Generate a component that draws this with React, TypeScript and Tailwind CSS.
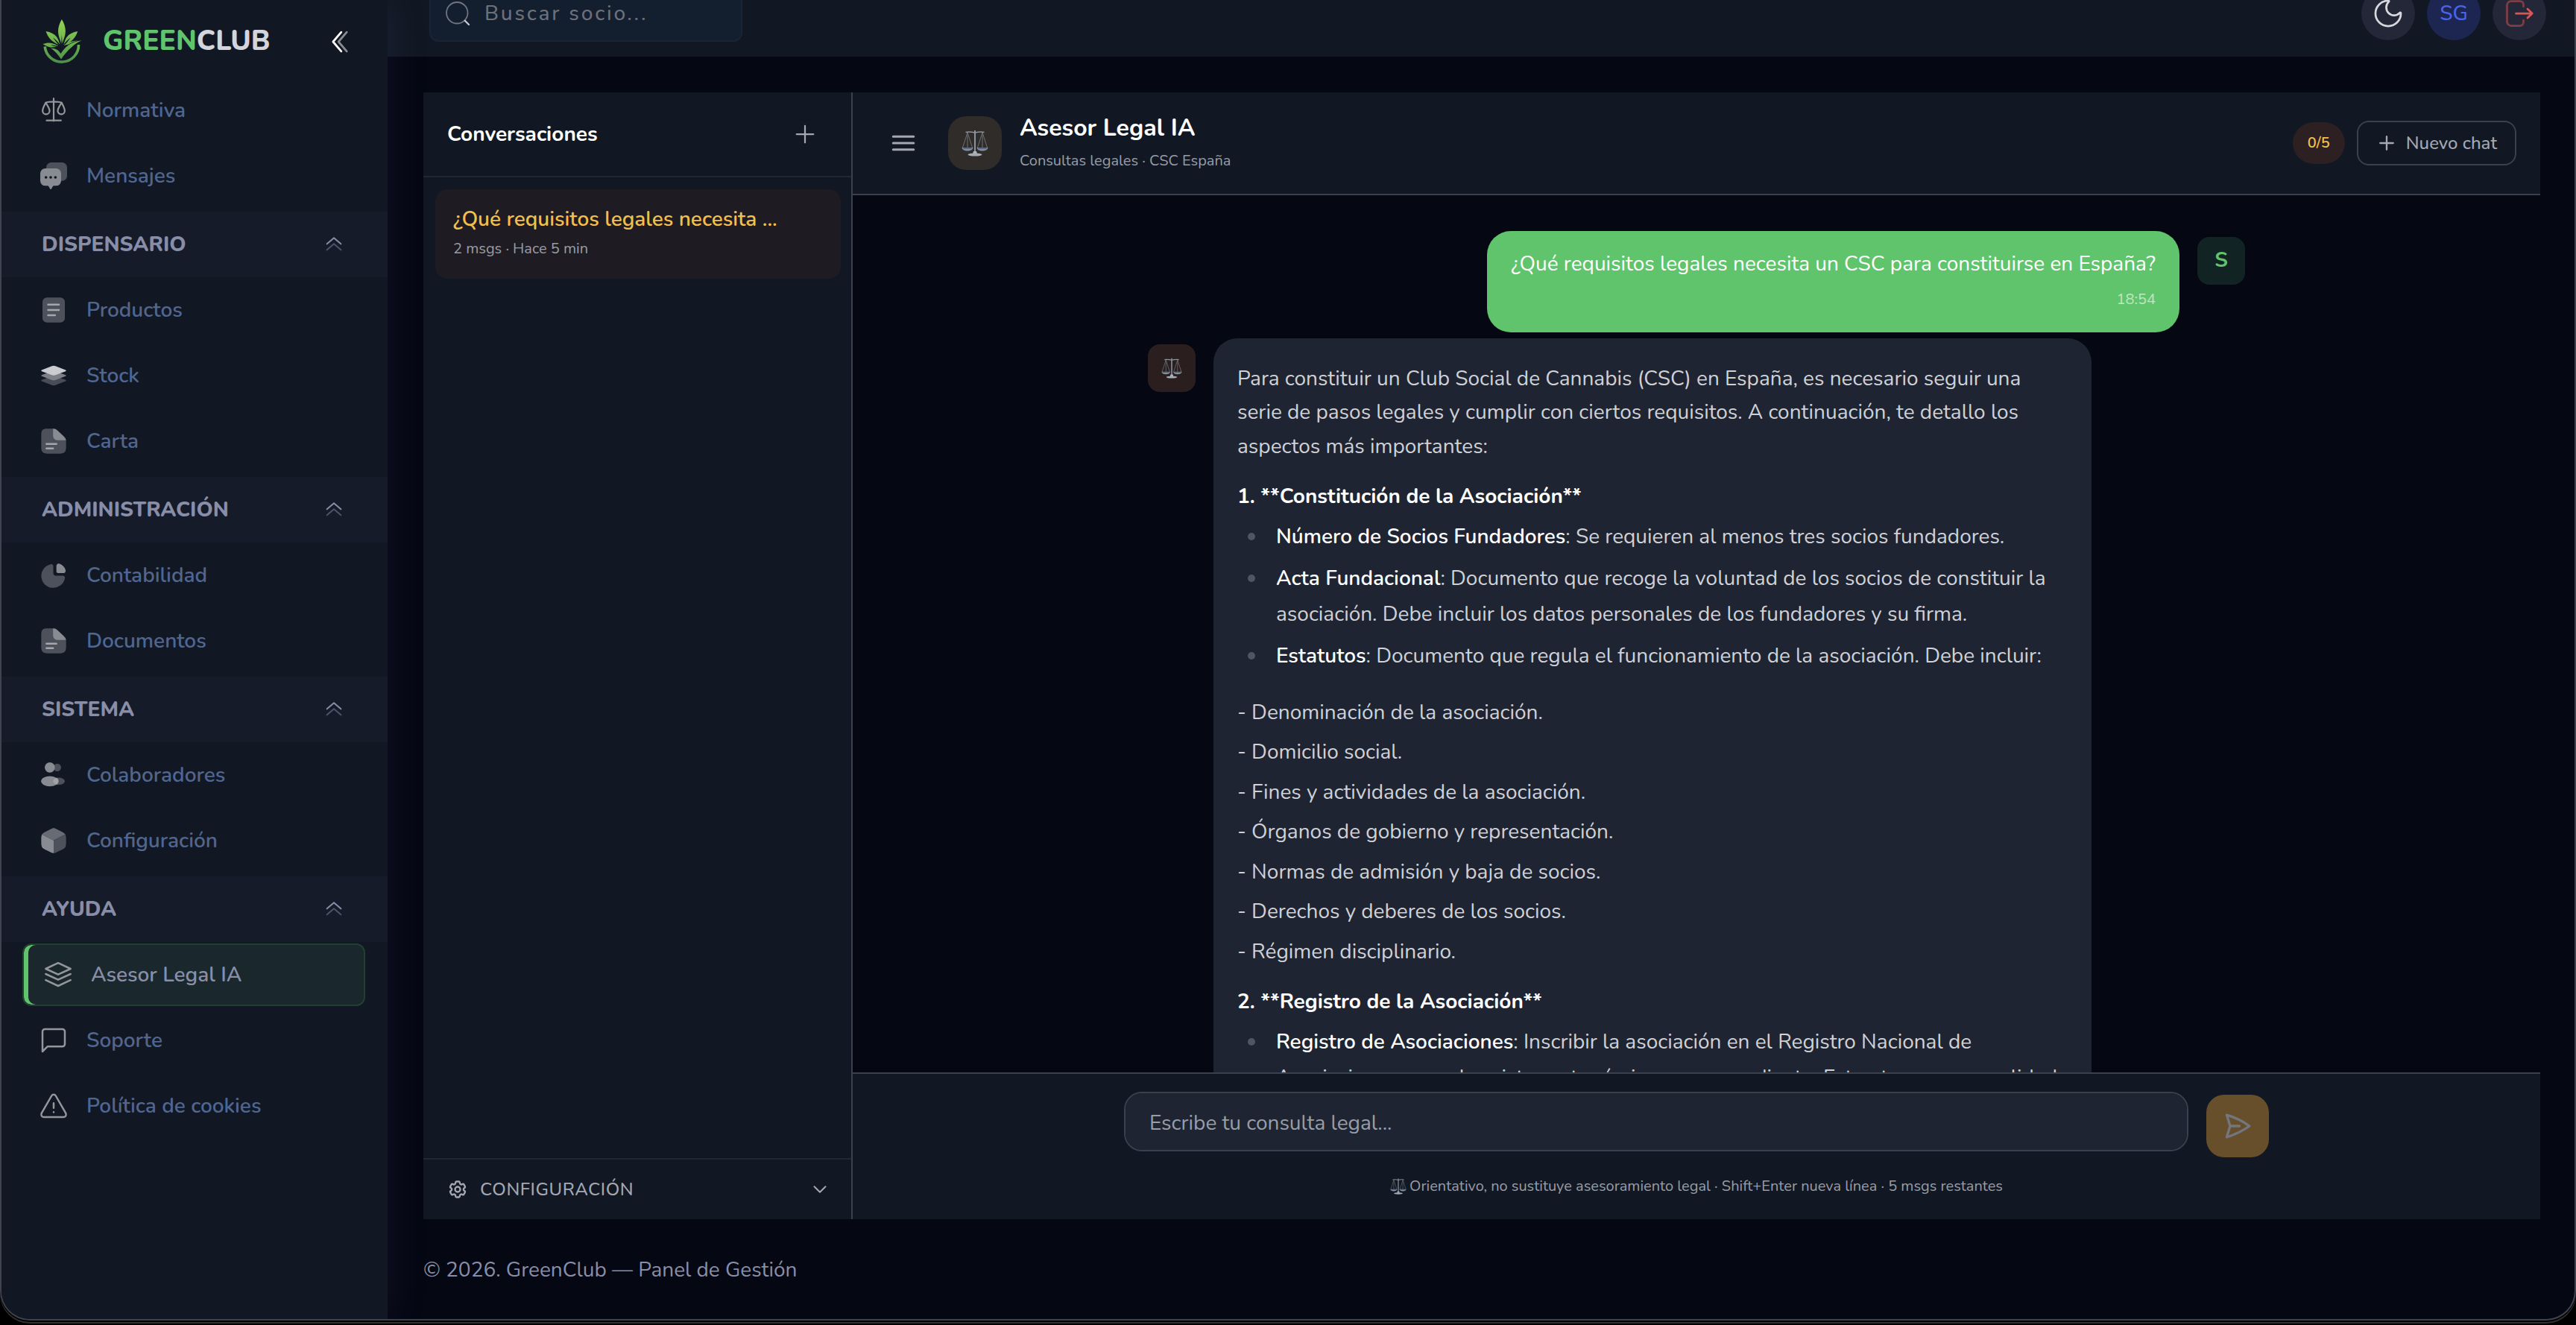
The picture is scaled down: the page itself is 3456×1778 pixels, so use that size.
import { useState } from "react";
import type { ReactNode } from "react";
import {
    HiOutlineBars3,
    HiOutlineChevronDown,
    HiOutlineCog6Tooth,
    HiOutlinePaperAirplane,
    HiOutlinePlus,
} from "react-icons/hi2";

const Icon = ({ className = "h-10 w-10", children }: { className?: string; children: ReactNode }) => (
    <svg
        className={`shrink-0 ${className}`}
        viewBox="0 0 24 24"
        fill="none"
        stroke="currentColor"
        strokeWidth="1.5"
        strokeLinecap="round"
        strokeLinejoin="round"
        aria-hidden="true"
    >
        {children}
    </svg>
);

const BalanceIcon = () => (
    <Icon>
        <path strokeWidth="1.3" d="M12 2.4V20.6M6.3 20.2h11.6M5.6 5.9C8 4.7 16 4.7 18.4 5.9" />
        <path strokeWidth="1.3" d="M5.6 5.9C4.6 8 3.1 10.4 3.1 12.4a2.8 2.8 0 0 0 5.6 0C8.7 10.4 6.9 8 5.6 5.9zM18.4 5.9c-1.3 2.1-3.1 4.5-3.1 6.5a2.8 2.8 0 0 0 5.6 0c0-2-1.5-4.4-2.5-6.5z" />
    </Icon>
);

const MessagesIcon = () => (
    <Icon>
        <rect x="6" y="1.2" width="16.8" height="14.8" rx="4" fill="#4d515c" stroke="none" />
        <path d="M5.2 6h8.8a4 4 0 0 1 4 4v6a4 4 0 0 1-4 4h-1.7c-.9 0-1.4 1.1-2 2.3-.3.6-1 .6-1.3 0-.6-1.2-1.1-2.3-2-2.3H5.2a4 4 0 0 1-4-4v-6a4 4 0 0 1 4-4z" fill="#888b91" stroke="none" />
        <g fill="#111823" stroke="none">
            <circle cx="5.8" cy="13.2" r="1.1" />
            <circle cx="9.6" cy="13.2" r="1.1" />
            <circle cx="13.4" cy="13.2" r="1.1" />
        </g>
    </Icon>
);

const ListIcon = () => (
    <Icon>
        <rect x="3" y="1.9" width="18" height="20.2" rx="3.5" fill="#4d515c" stroke="none" />
        <path stroke="#a5a7ad" d="M7.5 7.7h8.7M7.5 12h8.7M7.5 16.2h5.6" />
    </Icon>
);

const StockIcon = () => (
    <Icon>
        <path d="M2.4 15.5 12 12l9.6 3.5c.6.3.6.7 0 1l-8.1 3.1c-1 .4-2 .4-3 0l-8.1-3.1c-.6-.3-.6-.7 0-1z" fill="#474c57" stroke="none" />
        <path d="M2.4 11.5 12 8l9.6 3.5c.6.3.6.7 0 1l-8.1 3.1c-1 .4-2 .4-3 0l-8.1-3.1c-.6-.3-.6-.7 0-1z" fill="#7b7f86" stroke="none" />
        <path d="m2.4 7.5 8.1-3.1c1-.4 2-.4 3 0l8.1 3.1c.6.3.6.7 0 1l-8.1 3.1c-1 .4-2 .4-3 0L2.4 8.5c-.6-.3-.6-.7 0-1z" fill="#c9cbd0" stroke="none" />
    </Icon>
);

const NoteIcon = () => (
    <Icon>
        <path d="M6.5 2h5c1.6 0 2.5.5 3.6 1.5l5.1 4.8c1.2 1.1 1.8 2.2 1.8 3.8V17c0 3.5-1.3 5-4.8 5H6.8C3.3 22 2 20.5 2 17V7c0-3.5 1-5 4.5-5z" fill="#4d515c" stroke="none" />
        <path d="M11.5 2c1.6 0 2.5.5 3.6 1.5l5.1 4.8c.9.9 1.5 1.8 1.7 3H16c-3 0-4.5-1.4-4.5-4.3z" fill="#888b91" stroke="none" />
        <path stroke="#a5a7ad" d="M6.2 14.2h8M6.2 17.8h5.3" />
    </Icon>
);

const PieIcon = () => (
    <Icon>
        <path d="M9.5 3.1c1.3-.3 2.2.5 2.2 1.7v5.4c0 1.3.8 2.1 2.1 2.1h5.5c1.2 0 2 .9 1.7 2.2A9.6 9.6 0 1 1 9.5 3.1z" fill="#4d515c" stroke="none" />
        <path d="M14.2 4.5c0-1.5 1.2-2.3 2.6-1.8a8.3 8.3 0 0 1 4.7 4.8c.5 1.4-.3 2.7-1.8 2.7h-4.2c-.8 0-1.3-.5-1.3-1.3z" fill="#888b91" stroke="none" />
    </Icon>
);

const UsersIcon = () => (
    <Icon>
        <g fill="#4d515c" stroke="none">
            <circle cx="14.9" cy="5.9" r="3.1" />
            <ellipse cx="16" cy="17" rx="5" ry="2.9" />
        </g>
        <g fill="#888b91" stroke="none">
            <circle cx="8.9" cy="5.9" r="4.1" />
            <ellipse cx="8.9" cy="17" rx="7" ry="4.1" />
        </g>
        <path d="M14.6 14.3a5 2.9 0 0 0 0 5.3c1.7-1.3 1.7-4 0-5.3z" fill="#a0a2a8" stroke="none" />
    </Icon>
);

const CubeIcon = () => (
    <Icon>
        <path d="M12 2c.8 0 1.5.3 2.9 1l3.8 1.9c1.3.7 2.2 1.3 2.7 2.1L12 11.8 2.6 7c.5-.8 1.4-1.4 2.7-2.1L9.1 3c1.4-.7 2.1-1 2.9-1z" fill="#676b74" stroke="none" />
        <path d="M2.6 7C2.1 8 2 9.2 2 11v2c0 2.5.2 4 1.2 5 .8.8 3 1.7 5.9 3.1 1.4.7 2.1.9 2.9.9V11.8z" fill="#888b91" stroke="none" />
        <path d="M21.4 7c.5 1 .6 2.2.6 4v2c0 2.5-.2 4-1.2 5-.8.8-3 1.7-5.9 3.1-1.4.7-2.1.9-2.9.9V11.8z" fill="#4d515c" stroke="none" />
    </Icon>
);

const LayersIcon = () => (
    <Icon>
        <path d="m12 2.5-10 4.7 10 4.6 10-4.6zM2 11.4l10 4.6 10-4.6M2 16.3l10 4.7 10-4.7" />
    </Icon>
);

const ChatIcon = () => (
    <Icon>
        <path d="M21 15a2 2 0 0 1-2 2H7l-4 4V5a2 2 0 0 1 2-2h14a2 2 0 0 1 2 2z" />
    </Icon>
);

const WarningIcon = () => (
    <Icon>
        <path d="M10.3 3.9 2.3 17.8c-.8 1.5 0 3.2 1.7 3.2h16c1.7 0 2.5-1.7 1.7-3.2l-8-13.9c-.8-1.4-2.6-1.4-3.4 0zM12 9.8v3.9M12 17v.1" />
    </Icon>
);

const ScalesEmblem = ({ className }: { className: string }) => (
    <svg className={`shrink-0 ${className}`} viewBox="0 0 36 36" fill="none" aria-hidden="true">
        <path d="M5.5 3.5c4-1 8-.5 12.5.5 4.5-1 8.5-1.5 12.5-.5" stroke="#8d939b" strokeWidth="1.6" />
        <path d="M18 1v29" stroke="#8794a4" strokeWidth="2" />
        <path d="M8 4 1.5 24M8 4v20M8 4l6.5 20M28 4l-6.5 20M28 4v20M28 4l6.5 20" stroke="#6d7074" strokeWidth="1" />
        <path d="M.5 24h15c-.5 3-3.5 4.5-7.5 4.5S1 27 .5 24zM20.5 24h15c-.5 3-3.5 4.5-7.5 4.5s-7-1.5-7.5-4.5z" fill="#7e8ea3" />
        <path d="M2.5 25h11M22.5 25h11" stroke="#3c4654" strokeWidth="1" />
        <path d="M16 29h4l1 3h-6z" fill="#a9b6c4" />
        <ellipse cx="18" cy="33.5" rx="9.5" ry="2" fill="#a3abb4" />
    </svg>
);

const Logo = () => (
    <svg className="h-[60px] w-[58px] shrink-0" viewBox="0 0 58 60" aria-hidden="true">
        <defs>
            <linearGradient id="leaf" x1="0" y1="0" x2="0" y2="60" gradientUnits="userSpaceOnUse">
                <stop stopColor="#93d552" />
                <stop offset="1" stopColor="#4b8f4a" />
            </linearGradient>
        </defs>
        <g fill="url(#leaf)">
            <path d="M28.9 0c3 5 5 10.5 5 16 0 6-2.5 10.5-4.3 16.5l-.7-12-.7 12C26.4 26.5 24 22 24 16c0-5.500 2-11 4.900-16z" />
            <path d="M7.5 16c6.5 1 11.5 3.5 14.5 7.5 2.2 3 3.2 6 4.5 10.5-2-3-6-7-9.5-9.5 2.5 3.5 5 6.5 7.5 9.5-4-2-8.5-4.5-11.5-8-2.5-3-4-6-5.5-10z" />
            <path d="M50.3 16c-6.5 1-11.5 3.5-14.5 7.5-2.2 3-3.2 6-4.5 10.5 2-3 6-7 9.5-9.5-2.5 3.5-5 6.5-7.5 9.5 4-2 8.5-4.5 11.5-8 2.5-3 4-6 5.5-10z" />
            <path d="M3.5 33c5-2 9.5-2 13-.8 3 1 5 2 8 3.8-3-.8-7-1.5-10.5-1.5 2.5 1 5 1.7 8 2.3-3.5.8-7.5 1-10.5.2-3-.8-5.5-2.5-8-4z" />
            <path d="M14 38.5c3.5.5 6.5 1 8.5 2.3 2 1.4 3.5 3 5 5.2 5-8 10.5-12.5 17-15 4-1.5 7-2.2 11-2.4-5 1.8-9 4.5-13 8.4C36.5 42 32 47.5 28 53.5c-3.5-5.5-8-11-14-15z" />
            <path d="M38 33.5c4-2.5 8-4.5 13-5-5 .2-9.5 1-13 2.5-2.5 1-4.5 2-6.5 4z" />
        </g>
        <path d="M6.2 36.5a22.7 22.7 0 0 0 45.3-2.5" fill="none" stroke="url(#leaf)" strokeWidth="3.6" />
    </svg>
);

type NavItem = { label: string; icon: ReactNode; active?: boolean };

const topItems: NavItem[] = [
    { label: "Normativa", icon: <BalanceIcon /> },
    { label: "Mensajes", icon: <MessagesIcon /> },
];

const sections: { title: string; items: NavItem[] }[] = [
    {
        title: "DISPENSARIO",
        items: [
            { label: "Productos", icon: <ListIcon /> },
            { label: "Stock", icon: <StockIcon /> },
            { label: "Carta", icon: <NoteIcon /> },
        ],
    },
    {
        title: "ADMINISTRACIÓN",
        items: [
            { label: "Contabilidad", icon: <PieIcon /> },
            { label: "Documentos", icon: <NoteIcon /> },
        ],
    },
    {
        title: "SISTEMA",
        items: [
            { label: "Colaboradores", icon: <UsersIcon /> },
            { label: "Configuración", icon: <CubeIcon /> },
        ],
    },
    {
        title: "AYUDA",
        items: [
            { label: "Asesor Legal IA", icon: <LayersIcon />, active: true },
            { label: "Soporte", icon: <ChatIcon /> },
            { label: "Política de cookies", icon: <WarningIcon /> },
        ],
    },
];

const NavList = ({ items }: { items: NavItem[] }) => (
    <ul className="pb-1 pl-7 pr-[30px]">
        {items.map((item) => (
            <li key={item.label} className="py-0.5">
                <a
                    href="#"
                    aria-current={item.active ? "page" : undefined}
                    className={`flex h-[84px] items-center gap-6 rounded-xl border-2 text-[28px] font-semibold ${item.active
                        ? "border-[#22402f] bg-[#1a272c] pl-[26px] text-[#888ea8] shadow-[inset_6px_0_0_#60c46c]"
                        : "border-transparent pl-5 text-[#506690]"
                        }`}
                >
                    <span className="text-[#93969b]">{item.icon}</span>
                    {item.label}
                </a>
            </li>
        ))}
    </ul>
);

const Sidebar = () => (
    <aside className="relative z-10 w-[518px] shrink-0 bg-[#111823] shadow-[0_0_50px_rgba(94,92,154,0.15)]">
        <div className="flex h-[104px] items-center pb-1 pl-[52px] pr-[42px] pt-3">
            <a href="#" className="flex items-center gap-[26px] text-[37px] font-extrabold text-[#d3d4dc]">
                <Logo />
                <span>
                    <span className="text-[#60c46c]">GREEN</span>CLUB
                </span>
            </a>
            <button type="button" aria-label="Contraer menú" className="ml-auto text-white">
                <Icon className="h-11 w-11">
                    <path d="m13 19-6-7 6-7" />
                    <path opacity="0.5" d="m17 19-6-7 6-7" />
                </Icon>
            </button>
        </div>
        <nav>
            <NavList items={topItems} />
            {sections.map((section) => (
                <div key={section.title}>
                    <h2>
                        <button
                            type="button"
                            aria-expanded="true"
                            className="flex h-[88px] w-full items-center justify-between bg-[#151b29] pl-[54px] pr-14 text-[28px] font-extrabold text-[#888ea8]"
                        >
                            {section.title}
                            <Icon className="h-8 w-8">
                                <path d="m19 11.5-7-6-7 6" />
                                <path opacity="0.5" d="m19 17.5-7-6-7 6" />
                            </Icon>
                        </button>
                    </h2>
                    <NavList items={section.items} />
                </div>
            ))}
        </nav>
    </aside>
);

// The bar is scrolled partly out of view, so its content hangs from the bottom edge
const Topbar = () => (
    <header className="flex h-[76px] shrink-0 items-end overflow-hidden bg-[#111823]">
        <div className="flex h-[116px] w-full shrink-0 items-center justify-between pl-14 pr-[38px]">
            <label className="flex h-[76px] w-[420px] items-center gap-[18px] rounded-xl border-2 border-[#182537] bg-[#131e2f] pl-[18px] text-[#71757f]">
                <Icon className="h-9 w-9">
                    <circle cx="11.5" cy="11.5" r="9.5" strokeWidth="1.2" />
                    <path d="m18.5 18.5 3.5 3.5" className="text-[#c9cbd0]" />
                </Icon>
                <input
                    type="text"
                    aria-label="Buscar socio"
                    placeholder="Buscar socio..."
                    className="w-full bg-transparent text-[28px] font-medium tracking-widest outline-none placeholder:text-[#6b707b]"
                />
            </label>
            <div className="flex gap-4">
                <button type="button" aria-label="Modo oscuro" className="flex size-[72px] items-center justify-center rounded-full bg-[#232738] text-[#d7d8dc]">
                    <Icon className="h-11 w-11">
                        <path d="M12 2.7a9.3 9.3 0 1 0 9.3 9.3c0-.7-.6-.8-.9-.3A5.3 5.3 0 1 1 12.3 3.6c.5-.3.4-.9-.3-.9z" />
                    </Icon>
                </button>
                <button type="button" className="size-[72px] rounded-full bg-[#1c2650] text-[28px] font-medium text-[#4a63e7]">
                    SG
                </button>
                <button type="button" aria-label="Cerrar sesión" className="flex size-[72px] items-center justify-center rounded-full bg-[#232738] text-[#da5655]">
                    <Icon className="h-11 w-11">
                        <path opacity="0.5" d="M15 7V5.5A2.5 2.5 0 0 0 12.5 3H6a3 3 0 0 0-3 3v12a3 3 0 0 0 3 3h6.5a2.5 2.5 0 0 0 2.5-2.5V17" />
                        <path d="M9.5 12h11.8M18 8.7l3.4 3.3-3.4 3.3" />
                    </Icon>
                </button>
            </div>
        </div>
    </header>
);

const Conversations = () => (
    <section className="flex w-[576px] shrink-0 flex-col border-r-2 border-[#3a404d] bg-[#111823]">
        <div className="flex h-[114px] items-center justify-between border-b-2 border-[#212734] px-8">
            <h2 className="text-[28px] font-bold text-white">Conversaciones</h2>
            <button type="button" aria-label="Nueva conversación" className="p-3 text-[#a3a8b2]">
                <HiOutlinePlus className="size-9" />
            </button>
        </div>
        <div className="flex-1 pl-4 pr-3.5 pt-4">
            <button type="button" className="block h-[120px] w-full rounded-2xl bg-[#1e1c22] px-6 text-left">
                <span className="block text-[28px] font-semibold leading-10 text-[#f2bf4b]">¿Qué requisitos legales necesita ...</span>
                <span className="block text-xl leading-10 text-[#989ca6]">2 msgs · Hace 5 min</span>
            </button>
        </div>
        <button
            type="button"
            className="flex h-[82px] items-center gap-4 border-t-2 border-[#212734] pl-8 pr-[30px] text-2xl font-medium tracking-wide text-[#a3a8b2]"
        >
            <HiOutlineCog6Tooth className="size-7 stroke-2" />
            CONFIGURACIÓN
            <HiOutlineChevronDown className="ml-auto size-6 stroke-2" />
        </button>
    </section>
);

const Bullet = ({ title, children }: { title: string; children: ReactNode }) => (
    <li className="flex">
        <span className="ml-3.5 mr-7 mt-[19px] size-2.5 shrink-0 rounded-full bg-[#4f5561]" />
        <span>
            <strong className="font-semibold text-white">{title}</strong>: {children}
        </span>
    </li>
);

const statutes = [
    "Denominación de la asociación.",
    "Domicilio social.",
    "Fines y actividades de la asociación.",
    "Órganos de gobierno y representación.",
    "Normas de admisión y baja de socios.",
    "Derechos y deberes de los socios.",
    "Régimen disciplinario.",
];

const Messages = () => (
    <div className="min-h-0 flex-1 overflow-hidden pt-12">
        <div className="mx-auto flex w-full max-w-[1536px] flex-col gap-2 px-8 text-[28px] leading-relaxed">
            <div className="flex justify-end gap-6">
                <div className="max-w-4/5 rounded-[32px] bg-[#60c46c] px-8 pb-7 pt-[22px] text-white">
                    <p>¿Qué requisitos legales necesita un CSC para constituirse en España?</p>
                    <time className="mt-2 block text-right text-xl leading-8 text-white/60">18:54</time>
                </div>
                <div className="mt-2 flex size-16 shrink-0 items-center justify-center rounded-2xl bg-[#122324] font-bold text-[#60c46c]">
                    S
                </div>
            </div>
            <div className="flex gap-6">
                <div className="mt-2 flex size-16 shrink-0 items-center justify-center rounded-2xl bg-[#2a1f1e]">
                    <ScalesEmblem className="size-7" />
                </div>
                <div className="w-4/5 rounded-[32px] bg-[#1e2431] p-8 text-[#cfd1d6]">
                    <p>
                        Para constituir un Club Social de Cannabis (CSC) en España, es necesario seguir una serie de pasos
                        legales y cumplir con ciertos requisitos. A continuación, te detallo los aspectos más importantes:
                    </p>
                    <h3 className="mb-1.5 mt-[22px] font-bold text-white">1. **Constitución de la Asociación**</h3>
                    <ul className="flex flex-col gap-2 leading-[48px]">
                        <Bullet title="Número de Socios Fundadores">Se requieren al menos tres socios fundadores.</Bullet>
                        <Bullet title="Acta Fundacional">
                            Documento que recoge la voluntad de los socios de constituir la asociación. Debe incluir los
                            datos personales de los fundadores y su firma.
                        </Bullet>
                        <Bullet title="Estatutos">
                            Documento que regula el funcionamiento de la asociación. Debe incluir:
                        </Bullet>
                    </ul>
                    <div className="mt-[30px] flex flex-col gap-2">
                        {statutes.map((line) => (
                            <p key={line}>- {line}</p>
                        ))}
                    </div>
                    <h3 className="mb-1.5 mt-[22px] font-bold text-white">2. **Registro de la Asociación**</h3>
                    <ul className="flex flex-col gap-2 leading-[48px]">
                        <Bullet title="Registro de Asociaciones">
                            Inscribir la asociación en el Registro Nacional de Asociaciones o en el registro autonómico
                            correspondiente. Esto otorga personalidad jurídica a la asociación.
                        </Bullet>
                    </ul>
                </div>
            </div>
        </div>
    </div>
);

const Chat = () => {
    const [draft, setDraft] = useState("");

    return (
        <section className="flex min-w-0 flex-1 flex-col">
            <div className="flex h-[138px] shrink-0 items-center border-b-2 border-[#3a404d] bg-[#111823] px-8">
                <button type="button" aria-label="Mostrar conversaciones" className="p-4 text-[#a3a8b2]">
                    <HiOutlineBars3 className="size-10 stroke-[1.8]" />
                </button>
                <div className="ml-6 flex size-[72px] items-center justify-center rounded-3xl bg-[#302c2a]">
                    <ScalesEmblem className="size-9" />
                </div>
                <div className="ml-6 pt-1">
                    <h1 className="text-[32px] font-bold leading-[44px] text-white">Asesor Legal IA</h1>
                    <p className="text-xl leading-[44px] text-[#989ca6]">Consultas legales · CSC España</p>
                </div>
                <span className="ml-auto flex h-14 items-center rounded-full bg-[#2c2022] px-5 text-xl font-semibold text-[#f2bf4b]">
                    0/5
                </span>
                <button
                    type="button"
                    className="ml-4 flex h-[60px] items-center gap-3 rounded-2xl border-2 border-[#3a404d] px-6 text-2xl font-medium text-[#a3a8b2]"
                >
                    <HiOutlinePlus className="size-7 stroke-2" />
                    Nuevo chat
                </button>
            </div>
            <Messages />
            <div className="shrink-0 border-t-2 border-[#3a404d] bg-[#111823] pb-7 pt-6">
                <div className="mx-auto flex w-full max-w-[1536px] gap-6">
                    <textarea
                        rows={1}
                        aria-label="Consulta legal"
                        placeholder="Escribe tu consulta legal..."
                        value={draft}
                        onChange={(e) => setDraft(e.target.value)}
                        className="h-20 flex-1 resize-none rounded-3xl border-2 border-[#3a404d] bg-[#1e2431] px-8 py-5 text-[28px] leading-10 text-white outline-none placeholder:text-[#999da7]"
                    />
                    <button
                        type="button"
                        aria-label="Enviar"
                        className="mt-1 flex size-[84px] items-center justify-center rounded-3xl bg-[#674f2c] text-[#74767e]"
                    >
                        <HiOutlinePaperAirplane className="size-10 stroke-2" />
                    </button>
                </div>
                <p className="mt-[23px] flex items-center justify-center gap-1 text-xl leading-8 text-[#989ca6]">
                    <ScalesEmblem className="size-[22px]" />
                    Orientativo, no sustituye asesoramiento legal · Shift+Enter nueva línea · 5 msgs restantes
                </p>
            </div>
        </section>
    );
};

export default function App() {
    return (
        <div className="h-screen bg-black pb-1.5 font-['Nunito','Open_Sans',sans-serif]">
            <div className="flex h-full overflow-hidden rounded-b-[40px] border-2 border-t-0 border-[#3e434f] bg-[#050713] shadow-[0_2px_0_#000,0_4px_0_#33322f]">
                <Sidebar />
                <div className="flex min-w-0 flex-1 flex-col">
                    <Topbar />
                    <main className="flex min-h-0 flex-1 pl-12 pr-[46px] pt-12">
                        <Conversations />
                        <Chat />
                    </main>
                    <footer className="flex h-[134px] shrink-0 items-center px-12 pt-0.5 text-[28px] text-[#888ea8]">
                        © 2026. GreenClub — Panel de Gestión
                    </footer>
                </div>
            </div>
        </div>
    );
}
